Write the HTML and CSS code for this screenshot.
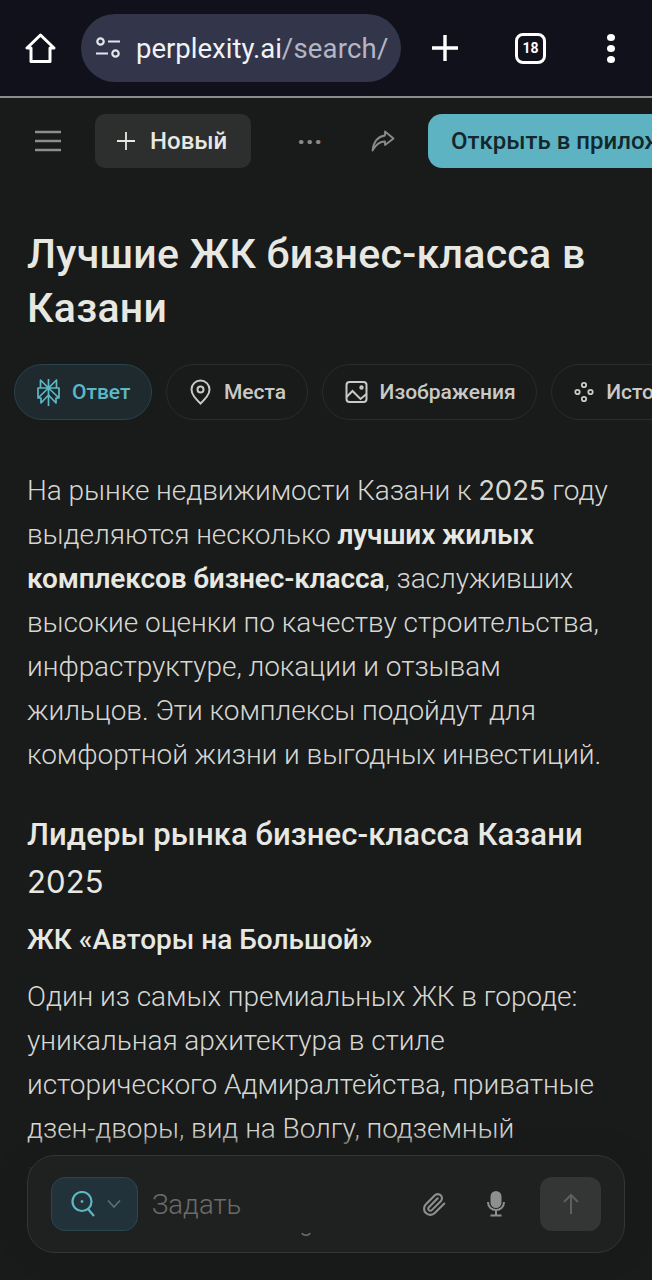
FILE: index.html
```html
<!DOCTYPE html>
<html lang="ru">
<head>
    <meta charset="UTF-8">
    <meta name="viewport" content="width=device-width, initial-scale=1.0">
    <title>Лучшие ЖК бизнес-класса в Казани</title>
    <link rel="stylesheet" href="styles.css">
</head>
<body>
    <header class="browser-bar">
        <svg class="home-icon" width="31" height="31" viewBox="0 0 31 31" fill="none" stroke="#fff" stroke-width="3" stroke-linejoin="round"><path d="M15.500 2 2 15h4v13.500h19V15h4z"/></svg>
        <div class="url-box">
            <svg width="28" height="24" viewBox="0 0 28 24" fill="none" stroke="#e4e6ee" stroke-width="2.200"><circle cx="5.500" cy="5.500" r="3.200"/><path d="M13 5.500h12M1 17.500h12"/><circle cx="20.500" cy="17.500" r="3.200"/></svg>
            <span class="url-text">perplexity.ai<span class="url-path">/search/l</span></span>
        </div>
        <svg class="new-tab" width="30" height="30" viewBox="0 0 30 30" stroke="#fff" stroke-width="3.400"><path d="M15 2v26M2 15h26"/></svg>
        <div class="tab-count">18</div>
        <div class="kebab"><i></i><i></i><i></i></div>
    </header>

    <nav class="page-bar">
        <svg class="menu-icon" width="28" height="22" viewBox="0 0 28 22" stroke="#8d8e8c" stroke-width="2.400"><path d="M1 2h26M1 11h26M1 20h26"/></svg>
        <div class="new-btn">
            <svg width="18" height="18" viewBox="0 0 18 18" stroke="#e8e8e3" stroke-width="1.800"><path d="M9 0v18M0 9h18"/></svg>
            <span>Новый</span>
        </div>
        <div class="dots">···</div>
        <svg class="share-icon" width="24" height="22" viewBox="0 0 24 22" fill="none" stroke="#8a8b89" stroke-width="1.800" stroke-linejoin="round"><path d="M14 1.500 22.500 8.500 14 15v-3.500C9 11.500 5 14 1.500 20.500 2.500 12 7 6.500 14 5.500z"/></svg>
        <div class="open-btn">Открыть в приложении</div>
    </nav>

    <main class="content">
        <h1>Лучшие ЖК бизнес-класса в Казани</h1>

        <div class="tabs">
            <div class="tab tab-active">
                <svg width="23" height="27" viewBox="0 0 23 27" fill="none" stroke="#5eb8c4" stroke-width="1.700" stroke-linejoin="round"><path d="M11.500 0v27M3.500 1l8 8 8-8v8h-16zM1 9h21v10h-3v5l-7.500-8-7.500 8v-5H1zM1 19l10.500-10L22 19"/></svg>
                Ответ
            </div>
            <div class="tab">
                <svg width="23" height="26" viewBox="0 0 23 26" fill="none" stroke="#c9cac6" stroke-width="2"><path d="M11.500 24.500C6.500 19.500 2.500 15.500 2.500 10.500a9 9 0 0 1 18 0c0 5-4 9-9 14z"/><circle cx="11.500" cy="10.500" r="3"/></svg>
                Места
            </div>
            <div class="tab">
                <svg width="23" height="24" viewBox="0 0 23 24" fill="none" stroke="#c9cac6" stroke-width="2"><rect x="1.500" y="2" width="20" height="20" rx="3"/><path d="M1.500 17l6-6 8 8 6-5"/><circle cx="16.500" cy="7.500" r="1.200"/></svg>
                Изображения
            </div>
            <div class="tab">
                <svg width="20" height="22" viewBox="0 0 20 22" fill="none" stroke="#c9cac6" stroke-width="1.800"><circle cx="10" cy="4" r="2.200"/><circle cx="3.500" cy="11" r="2.200"/><circle cx="16.500" cy="11" r="2.200"/><circle cx="10" cy="18" r="2.200"/></svg>
                Источники
            </div>
        </div>

        <p class="lead">На рынке недвижимости Казани к <span class="num">2025</span> году выделяются несколько <strong>лучших жилых комплексов бизнес-класса</strong>, заслуживших высокие оценки по качеству строительства, инфраструктуре, локации и отзывам жильцов. Эти комплексы подойдут для комфортной жизни и выгодных инвестиций.</p>

        <h2>Лидеры рынка бизнес-класса Казани <span class="num">2025</span></h2>
        <h3>ЖК «Авторы на Большой»</h3>
        <p class="lead">Один из самых премиальных ЖК в городе: уникальная архитектура в стиле исторического Адмиралтейства, приватные дзен-дворы, вид на Волгу, подземный паркинг и закрытая территория.</p>
    </main>

    <div class="composer">
        <div class="mode-btn">
            <svg width="26" height="26" viewBox="0 0 26 26" fill="none" stroke="#5eb8c4" stroke-width="2.200"><circle cx="11" cy="10.500" r="9.500"/><path d="M17 18l6 7"/><circle cx="11" cy="10.500" r="1" fill="#5eb8c4" stroke-width="1"/></svg>
            <svg width="16" height="10" viewBox="0 0 16 10" fill="none" stroke="#56707a" stroke-width="1.800"><path d="M2 1.500l6 6.500 6-6.500"/></svg>
        </div>
        <span class="placeholder">Задать</span>
        <svg class="clip-icon" width="25" height="25" viewBox="0 0 24 24" fill="none" stroke="#8f908e" stroke-width="2" stroke-linecap="round"><path d="m21.440 11.050-9.190 9.190a6 6 0 0 1-8.490-8.490l8.570-8.570A4 4 0 1 1 18 8.840l-8.590 8.570a2 2 0 0 1-2.830-2.830l8.490-8.480"/></svg>
        <svg class="mic-icon" width="20" height="26" viewBox="0 0 20 26" fill="none" stroke="#8f908e" stroke-width="2"><rect x="5.500" y="1" width="9" height="15" rx="4.500" fill="#8f908e"/><path d="M2 11c0 10.500 16 10.500 16 0M10 19v5M4.500 24.500h11"/></svg>
        <div class="send-btn">
            <svg width="18" height="22" viewBox="0 0 18 22" fill="none" stroke="#5f605e" stroke-width="2"><path d="M9 21V2M2 9l7-7 7 7"/></svg>
        </div>
        <svg class="scroll-hint" width="10" height="5" viewBox="0 0 10 5" fill="none" stroke="#6d6e6c" stroke-width="1.500"><path d="M1 1c1 3 7 3 8 0"/></svg>
    </div>
</body>
</html>
```

FILE: styles.css
```css
html, body {
    margin: 0;
    height: 1280px;
    overflow: hidden;
}
body {
    position: relative;
    background: #191a1a;
    font-family: Roboto, sans-serif;
    color: #e8e8e3;
}
.browser-bar {
    display: flex;
    align-items: center;
    height: 96px;
    background: #10111a;
    border-bottom: 2px solid #8c8d90;
}
.home-icon {
    margin-left: 25px;
    flex: none;
}
.url-box {
    display: flex;
    align-items: center;
    gap: 13px;
    width: 320px;
    height: 68px;
    margin-left: 25px;
    padding-left: 14px;
    box-sizing: border-box;
    background: #33364a;
    border-radius: 34px;
    white-space: nowrap;
}
.url-text {
    width: 252px;
    overflow: hidden;
    font-size: 27.500px;
    color: #f1f2f6;
}
.url-path {
    color: #b4b6c4;
    letter-spacing: 0.2px;
}
.new-tab {
    margin-left: 29px;
    flex: none;
}
.tab-count {
    width: 31px;
    height: 31px;
    margin-left: 55px;
    box-sizing: border-box;
    border: 3px solid #fff;
    border-radius: 8px;
    font-size: 14px;
    font-weight: 700;
    color: #fff;
    display: flex;
    align-items: center;
    justify-content: center;
    flex: none;
}
.kebab {
    display: flex;
    flex-direction: column;
    gap: 4px;
    margin-left: 61px;
}
.kebab i {
    width: 8px;
    height: 7px;
    border-radius: 50%;
    background: #fff;
}
.page-bar {
    display: flex;
    align-items: center;
    height: 54px;
    margin-top: 16px;
    white-space: nowrap;
}
.menu-icon {
    margin-left: 34px;
    flex: none;
}
.new-btn {
    display: flex;
    align-items: center;
    gap: 15px;
    width: 156px;
    height: 54px;
    margin-left: 33px;
    padding-left: 22px;
    box-sizing: border-box;
    background: #2d2e2e;
    border-radius: 10px;
    font-size: 24px;
    font-weight: 500;
    flex: none;
}
.dots {
    width: 24px;
    margin-left: 46px;
    font-size: 28px;
    font-weight: 700;
    color: #8a8b89;
    text-align: center;
    flex: none;
}
.share-icon {
    margin-left: 50px;
    flex: none;
}
.open-btn {
    height: 54px;
    margin-left: 33px;
    padding: 0 23px;
    display: flex;
    align-items: center;
    background: #5eb3c3;
    color: #13272c;
    border-radius: 14px;
    font-size: 24px;
    font-weight: 500;
    flex: none;
}
.content {
    padding: 0 30px 0 27px;
}
h1 {
    margin: 59px 0 0;
    font-size: 41px;
    line-height: 54px;
    font-weight: 500;
    letter-spacing: 0.3px;
}
.tabs {
    display: flex;
    gap: 14px;
    margin: 29px -30px 0 -13px;
    white-space: nowrap;
}
.tab {
    display: flex;
    align-items: center;
    gap: 12px;
    height: 56px;
    padding: 0 20.500px 0 22px;
    box-sizing: border-box;
    border: 1px solid #2a2c2c;
    border-radius: 28px;
    font-size: 21px;
    font-weight: 500;
    color: #c9cac6;
    flex: none;
}
.tab-active {
    background: #1e2a2e;
    border-color: #27444c;
    color: #5eb8c4;
}
.lead {
    margin: 48px 0 0;
    font-size: 28px;
    line-height: 44px;
    font-weight: 300;
    letter-spacing: -0.05px;
    color: #d6d7d2;
}
.lead strong {
    font-weight: 600;
    letter-spacing: -0.12px;
    color: #e8e8e3;
}
.num {
    font-family: Inter, sans-serif;
    font-weight: 400;
}
.lead .num {
    font-size: 0.98em;
}
h2 {
    margin: 34px 0 0;
    font-size: 31px;
    line-height: 47px;
    font-weight: 500;
    letter-spacing: 0.12px;
}
h3 {
    margin: 12px 0 0;
    font-size: 28px;
    line-height: 44px;
    font-weight: 500;
}
h3 + .lead {
    margin-top: 13px;
}
.composer {
    position: absolute;
    left: 27px;
    top: 1155px;
    width: 598px;
    height: 98px;
    box-sizing: border-box;
    display: flex;
    align-items: center;
    padding: 0 23px;
    background: #1f2121;
    border: 1px solid #343636;
    border-radius: 28px;
    box-shadow: 0 0 14px 12px #191a1a;
}
.mode-btn {
    display: flex;
    align-items: center;
    justify-content: center;
    gap: 9px;
    width: 87px;
    height: 54px;
    padding-left: 4px;
    background: #21323a;
    border: 1px solid #2c4650;
    border-radius: 14px;
    box-sizing: border-box;
    flex: none;
}
.placeholder {
    margin-left: 14px;
    font-size: 27.500px;
    font-weight: 300;
    color: #6b6c6a;
    flex: 1;
}
.mic-icon {
    margin-left: 39px;
}
.send-btn {
    display: flex;
    align-items: center;
    justify-content: center;
    width: 61px;
    height: 54px;
    margin-left: 34px;
    background: #343535;
    border-radius: 12px;
    flex: none;
}
.scroll-hint {
    position: absolute;
    left: 273px;
    top: 76px;
}
```
